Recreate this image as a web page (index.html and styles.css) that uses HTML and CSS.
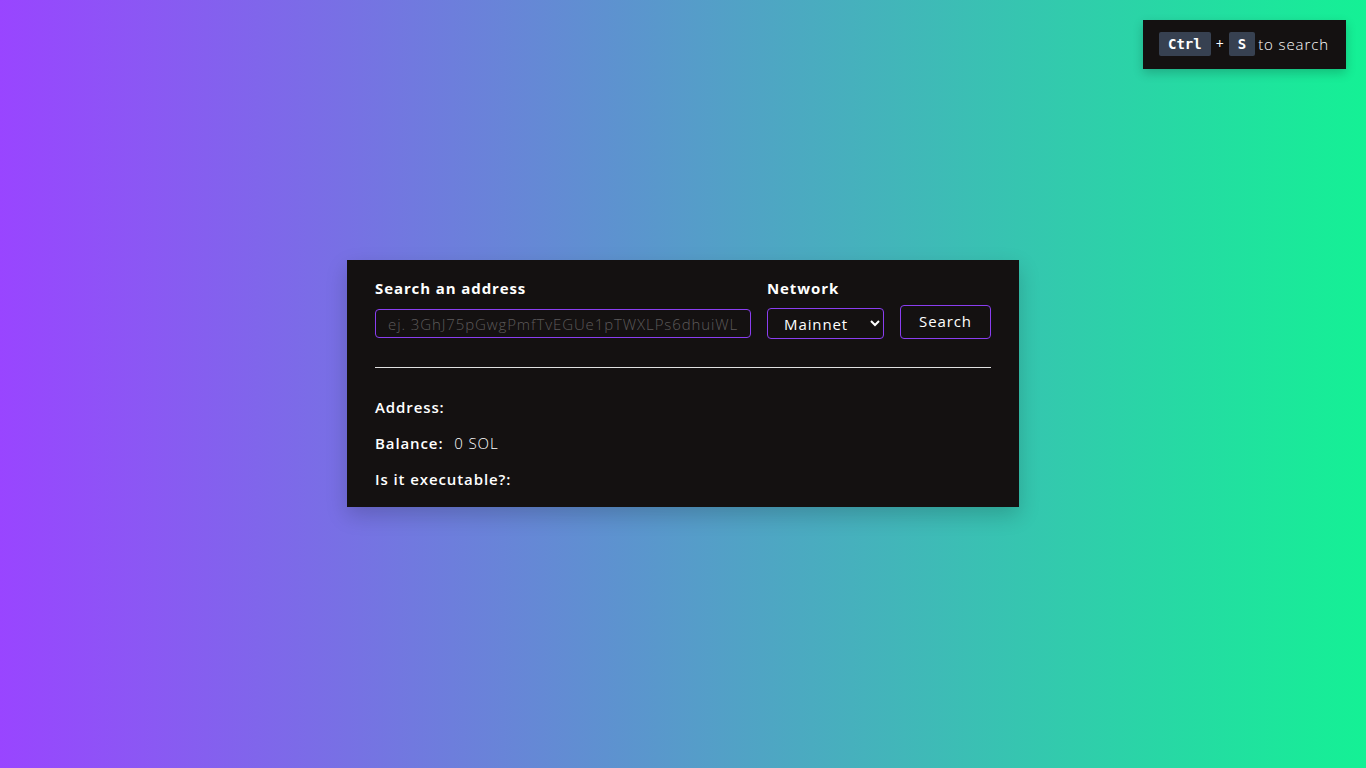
FILE: index.html
```html
<!DOCTYPE html>
<html>
<head>
<meta charset="utf-8">
<link rel="stylesheet" href="styles.css">
</head>
<body>
<div class="hint"><kbd>Ctrl</kbd><span class="plus">+</span><kbd>S</kbd><span class="hint-text">to search</span></div>
<main class="page">
  <section class="card">
    <div class="form">
      <div class="field field-address">
        <label class="label">Search an address</label>
        <input class="input" type="text" placeholder="ej. 3GhJ75pGwgPmfTvEGUe1pTWXLPs6dhuiWL2wF8rGh7Qy">
      </div>
      <div class="field field-network">
        <label class="label">Network</label>
        <select class="select"><option>Mainnet</option></select>
      </div>
      <button class="btn">Search</button>
    </div>
    <hr class="sep">
    <div class="info">
      <p class="row"><span class="key">Address:</span></p>
      <p class="row"><span class="key">Balance:</span> <span class="val">0 SOL</span></p>
      <p class="row"><span class="key">Is it executable?:</span></p>
    </div>
  </section>
</main>
</body>
</html>
```
FILE: styles.css
```css
* { box-sizing: border-box; }
html, body { margin: 0; height: 100%; }
body {
  font-family: "Open Sans", "Noto Sans", sans-serif;
  letter-spacing: 0.9px;
  background: linear-gradient(90deg, #9945ff 0%, #14f195 100%);
  color: #fff;
  min-height: 768px;
}
.hint {
  position: absolute;
  top: 20px;
  right: 20px;
  width: 203px;
  height: 49px;
  background: #141111;
  display: flex;
  align-items: center;
  padding-left: 16px;
  padding-bottom: 2px;
  font-size: 15px;
  box-shadow: 0 4px 10px rgba(0,0,0,0.2);
}
.hint kbd {
  font-family: "DejaVu Sans Mono", "Liberation Mono", monospace;
  font-weight: bold;
  font-size: 14px;
  letter-spacing: 0;
  background: #374151;
  color: #fff;
  border-radius: 2px;
  padding: 4px 9px;
  line-height: 16px;
}
.plus { margin: 0 5px 0 5px; font-size: 14px; letter-spacing: 0; }
.hint-text { margin-left: 3px; font-weight: 300; }
.page {
  display: flex;
  justify-content: center;
  padding-top: 260px;
}
.card {
  width: 672px;
  height: 247px;
  background: #141111;
  padding: 18px 28px 0 28px;
  box-shadow: 0 8px 20px rgba(0,0,0,0.18);
}
.form {
  display: flex;
  align-items: flex-end;
  gap: 16px;
}
.field { display: flex; flex-direction: column; }
.field-address { width: 376px; }
.label {
  font-weight: 700;
  font-size: 15px;
  line-height: 20px;
  margin-bottom: 11px;
}
.field-network .label { margin-bottom: 10px; }
.input {
  height: 29px;
  margin-bottom: 1px;
  border: 1px solid #8a3ef0;
  border-radius: 4px;
  background: #141111;
  color: #fff;
  font-family: inherit;
  letter-spacing: 0.9px;
  font-size: 15px;
  font-weight: 300;
  padding: 0 12px;
  outline: none;
}
.input::placeholder { color: #5d5a5a; }
.select {
  width: 117px;
  height: 31px;
  border: 1px solid #8a3ef0;
  border-radius: 4px;
  background: #141111;
  color: #fff;
  font-family: inherit;
  letter-spacing: 0.9px;
  font-size: 15px;
  padding: 0 12px;
}
.btn {
  width: 91px;
  height: 34px;
  margin-bottom: 0;
  border: 1px solid #8a3ef0;
  border-radius: 4px;
  background: #141111;
  color: #fff;
  font-family: inherit;
  letter-spacing: 0.9px;
  font-size: 15px;
  font-weight: 500;
  padding: 0 0 2px 0;
}
.sep {
  border: 0;
  border-top: 1px solid #e0e0e0;
  margin: 28px 0 0 0;
}
.info { padding-top: 29px; }
.row {
  margin: 0 0 16px 0;
  font-size: 15px;
  line-height: 20px;
}
.key { font-weight: 600; }
.val { font-weight: 300; margin-left: 6px; }
```
